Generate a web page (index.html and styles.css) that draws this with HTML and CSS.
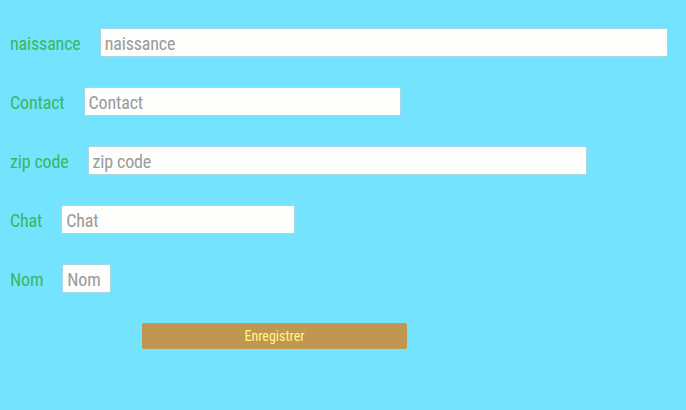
FILE: index.html
```html
<!DOCTYPE html>
<html lang="fr">
<head>
<meta charset="utf-8">
<link rel="stylesheet" href="styles.css">
</head>
<body>
<form class="form">
  <div class="row"><label class="lbl" for="f1">naissance</label><input class="field w-naissance" id="f1" placeholder="naissance"></div>
  <div class="row"><label class="lbl" for="f2">Contact</label><input class="field w-contact" id="f2" placeholder="Contact"></div>
  <div class="row"><label class="lbl" for="f3">zip code</label><input class="field w-zip" id="f3" placeholder="zip code"></div>
  <div class="row"><label class="lbl" for="f4">Chat</label><input class="field w-chat" id="f4" placeholder="Chat"></div>
  <div class="row"><label class="lbl" for="f5">Nom</label><input class="field w-nom" id="f5" placeholder="Nom"></div>
  <div class="actions"><button type="button" class="btn">Enregistrer</button></div>
</form>
</body>
</html>
```
FILE: styles.css
```css
html, body {
  margin: 0;
  background: #74e4fe;
  height: 100%;
}
.form {
  display: flex;
  flex-direction: column;
  gap: 30px;
  padding: 28px 0 0 10px;
  font-family: "Liberation Sans Narrow", "Roboto Condensed", "Liberation Sans", sans-serif;
}
.row {
  display: flex;
  align-items: center;
  gap: 19px;
  height: 29px;
}
.lbl {
  color: #3ab660;
  font-size: 18px;
  letter-spacing: -0.15px;
  padding-top: 2px;
}
.field {
  box-sizing: border-box;
  height: 29px;
  border: 1px solid #a8d6e2;
  border-radius: 2px;
  background: #fdfdfb;
  padding: 2px 4px 0;
  font-family: inherit;
  font-size: 18px;
  letter-spacing: -0.15px;
  color: #333;
  outline: none;
}
.field::placeholder { color: #9a9a9a; }
.w-naissance { width: 568px; }
.w-contact { width: 317px; }
.w-zip { width: 499px; }
.w-chat { width: 234px; }
.w-nom { width: 49px; }
.actions {
  display: flex;
  padding-left: 132px;
}
.btn {
  width: 265px;
  height: 26px;
  border: none;
  border-radius: 2px;
  background: #bf9750;
  color: #fff68a;
  font-family: inherit;
  font-size: 14px;
  padding: 0;
}
```
